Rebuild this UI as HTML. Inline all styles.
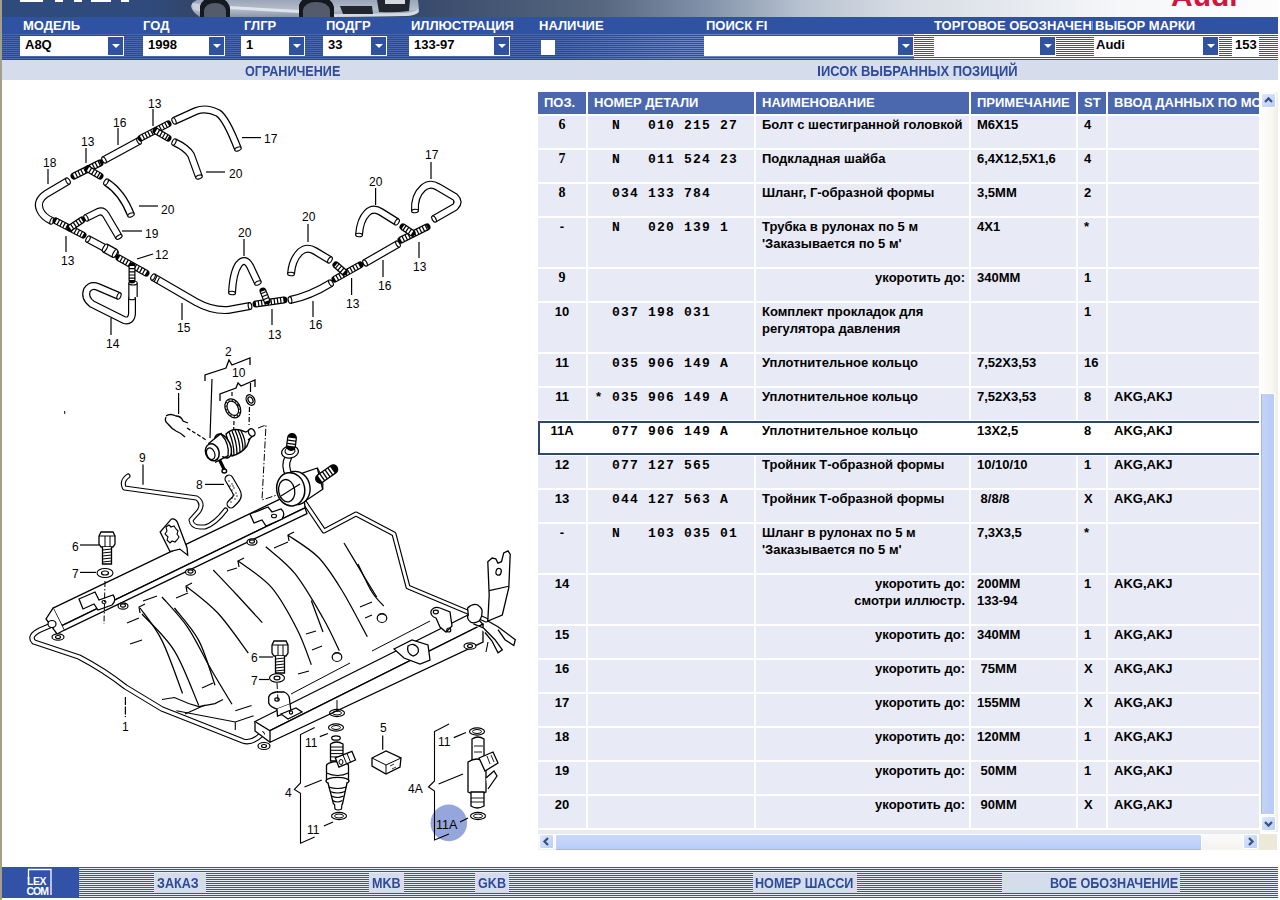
<!DOCTYPE html>
<html><head><meta charset="utf-8">
<style>
*{margin:0;padding:0;box-sizing:border-box}
html,body{width:1280px;height:900px;overflow:hidden;background:#fff;font-family:"Liberation Sans",sans-serif}
.a{position:absolute}
#lb{left:0;top:0;width:2px;height:900px;background:#a39f8a}
#top{left:2px;top:0;width:1276px;height:17px;background:linear-gradient(90deg,#2f4a7c 0px,#2f4a7c 150px,#33466a 190px,#36486a 400px,#56677f 600px,#8090a8 700px,#b8c2d0 800px,#d6dce4 900px,#e4e8ee 1000px,#f6f7f9 1120px,#fdfdfe 1276px)}
#band{left:2px;top:17px;width:1276px;height:17px;background:#3052a2}
#stripes{left:2px;top:34px;width:1276px;height:26px;background:repeating-linear-gradient(180deg,#4a66ad 0px,#4a66ad 1px,#2c4a90 1px,#2c4a90 2px)}
#stripesM{left:560px;top:34px;width:354px;height:26px;background:repeating-linear-gradient(180deg,#6a85c0 0px,#6a85c0 1px,#334f90 1px,#334f90 2px);-webkit-mask-image:linear-gradient(90deg,transparent,#000 120px)}
#stripesR{left:914px;top:34px;width:364px;height:26px;background:repeating-linear-gradient(180deg,#fff 0px,#fff 1px,#3a55a0 1px,#3a55a0 2px)}
.lbl{position:absolute;top:19px;color:#fff;font-weight:bold;font-size:13px;line-height:14px;white-space:nowrap}
.dd{position:absolute;top:36px;height:20px;background:#fff;border:1px solid #fff}
.dd .ar{position:absolute;right:0;top:0;width:15px;height:18px;background:#3052a2}
.dd .ar:after{content:"";position:absolute;left:4px;top:7px;border-left:4px solid transparent;border-right:4px solid transparent;border-top:4px solid #fff}
.dd .v{position:absolute;left:4px;top:1px;font-size:13px;font-weight:bold;line-height:14px;color:#000}
#title{left:2px;top:60px;width:1276px;height:20px;background:#d5dcec}
.ttl{position:absolute;top:64px;color:#2d4a9b;font-weight:bold;font-size:14px;line-height:14px;white-space:nowrap;transform:scaleX(0.9);transform-origin:0 0}
/* table */
.hd{position:absolute;top:92px;height:22px;background:#4b67ae}
.hdt{position:absolute;top:96px;color:#fff;font-weight:bold;font-size:13px;line-height:14px;white-space:nowrap;overflow:hidden}
.r{position:absolute;left:0;width:1280px}
.c{position:absolute;top:0;height:100%;background:#e8ebf5}
.sel .c{background:#fff}
.t{position:absolute;font-size:13px;line-height:17px;font-weight:bold;color:#000;white-space:nowrap}
.pos{left:538px;width:48px;text-align:center}
.part{margin-top:1px;left:612px;font-family:"Liberation Mono",monospace;font-size:13px;letter-spacing:1.2px}
.star{left:596px}
.ser{font-family:"Liberation Serif",serif;font-size:14px}
.name{left:762px}
.namer{left:756px;width:209px;text-align:right}
.note{left:977px}
.st{left:1084px}
.inp{left:1114px}
#selb{left:538px;top:421px;width:721px;height:34px;border:2px solid #2d4577;border-right:none}
/* scrollbars */
#vtrack{left:1259px;top:92px;width:19px;height:740px;background:linear-gradient(90deg,#fff 0%,#faf9f3 60%,#f0eee4 100%)}
.sbtn{position:absolute;width:15px;height:15px;border:1px solid #fff;border-radius:2px;background:linear-gradient(135deg,#dde8fd,#b8cdf5)}
#vthumb{left:1261px;top:393px;width:14px;height:422px;border:1px solid #fff;border-left:1px solid #aab6cc;border-radius:2px;background:linear-gradient(90deg,#c5d2f9,#b6cbf5)}
#htrack{left:538px;top:830px;width:722px;height:20px;background:linear-gradient(180deg,#e9eaee 0px,#e9eaee 4px,#fbfbfb 4px,#f4f3ee 20px)}
#hthumb{left:555px;top:834px;width:647px;height:16px;border:1px solid #fff;border-bottom:1px solid #aab6cc;border-radius:2px;background:linear-gradient(180deg,#cbd8fc,#b9cdf7)}
#corner{left:1259px;top:834px;width:18px;height:16px;background:#ece9d9}
/* footer */
#foot{left:2px;top:867px;width:1276px;height:31px;background:repeating-linear-gradient(180deg,#3d5594 0px,#3d5594 1px,#e9edf7 1px,#e9edf7 2px)}
#flogo{left:2px;top:867px;width:77px;height:31px;background:#3252a8}
.fb{position:absolute;top:873px;height:20px;background:#d5dcec}
.fbt{position:absolute;top:876px;color:#2d4a9b;font-weight:bold;font-size:14px;line-height:14px;white-space:nowrap;transform:scaleX(0.9);transform-origin:0 0}
</style></head><body>
<div class="a" id="lb"></div>
<div class="a" id="top"></div>
<div class="a" style="left:20px;top:0;width:23px;height:2px;background:#fff"></div>
<div class="a" style="left:55px;top:0;width:8px;height:2px;background:#fff"></div>
<div class="a" style="left:74px;top:0;width:8px;height:2px;background:#fff"></div>
<div class="a" style="left:91px;top:0;width:20px;height:2px;background:#fff"></div>
<div class="a" style="left:121px;top:0;width:8px;height:2px;background:#fff"></div>
<svg class="a" style="left:180px;top:0" width="250" height="17" viewBox="180 0 250 17">
<defs><linearGradient id="cg" x1="0" y1="0" x2="0" y2="1"><stop offset="0" stop-color="#9aa5b8"/><stop offset="0.55" stop-color="#b4bdcb"/><stop offset="1" stop-color="#8a95a8"/></linearGradient></defs>
<path d="M197,0 L418,0 L419,10 Q417,15 405,16 L340,17 L200,17 Q192,12 191,6 Q192,2 197,0 Z" fill="url(#cg)"/>
<path d="M192,3 L201,4 L201,12 L193,9 Z" fill="#c9d0da"/>
<path d="M228,6 L300,10 L300,13 L228,9 Z" fill="#dfe4ea"/><path d="M333,14 L405,13 Q415,12 418,9 L419,12 Q415,16 405,16 L333,17 Z" fill="#d5dae2"/>
<path d="M200,17 L200,6 Q203,-3 215,-3 Q228,-2 230,8 L230,17 Z" fill="#14181f"/>
<path d="M204,17 L204,10 Q206,3 215,3 Q225,3 226,11 L226,17 Z" fill="#545c6b"/>
<path d="M299,17 L299,5 Q302,-4 316,-4 Q332,-3 334,7 L334,17 Z" fill="#14181f"/>
<path d="M303,17 L303,10 Q305,2 316,2 Q328,2 330,10 L330,17 Z" fill="#545c6b"/>
<path d="M340,6 L372,6 L373,14 L343,14 Z" fill="#22262e"/>
<path d="M377,0 L410,0 L409,11 Q395,13 379,12 Z" fill="#22262e"/>
<rect x="385" y="0" width="20" height="4" fill="#d5d9df"/>
</svg>
<div class="a" style="left:1171px;top:-19px;font-size:30px;line-height:30px;font-weight:bold;color:#d4143c;letter-spacing:0px">Audi</div>
<div class="a" id="band"></div>
<div class="a" id="stripes"></div>
<div class="a" id="stripesM"></div><div class="a" id="stripesR"></div>

<div class="lbl" style="left:23px">МОДЕЛЬ</div>
<div class="lbl" style="left:143px">ГОД</div>
<div class="lbl" style="left:244px">ГЛГР</div>
<div class="lbl" style="left:326px">ПОДГР</div>
<div class="lbl" style="left:411px">ИЛЛЮСТРАЦИЯ</div>
<div class="lbl" style="left:539px">НАЛИЧИЕ</div>
<div class="lbl" style="left:706px">ПОИСК FI</div>
<div class="lbl" style="left:934px;width:159px;overflow:hidden">ТОРГОВОЕ ОБОЗНАЧЕНИЕ</div>
<div class="lbl" style="left:1095px">ВЫБОР МАРКИ</div>

<div class="dd" style="left:20px;width:104px"><div class="v">A8Q</div><div class="ar"></div></div>
<div class="dd" style="left:143px;width:82px"><div class="v">1998</div><div class="ar"></div></div>
<div class="dd" style="left:241px;width:64px"><div class="v">1</div><div class="ar"></div></div>
<div class="dd" style="left:323px;width:64px"><div class="v">33</div><div class="ar"></div></div>
<div class="dd" style="left:409px;width:101px"><div class="v">133-97</div><div class="ar"></div></div>
<div class="a" style="left:541px;top:40px;width:14px;height:15px;background:#fff"></div>
<div class="dd" style="left:704px;width:210px"><div class="ar"></div></div>
<div class="dd" style="left:934px;width:122px"><div class="ar"></div></div>
<div class="dd" style="left:1094px;width:125px"><div class="v" style="left:1px">Audi</div><div class="ar"></div></div>
<div class="dd" style="left:1232px;width:27px"><div class="v" style="left:2px">153</div></div>

<div class="a" id="title"></div>
<div class="ttl" style="left:245px">ОГРАНИЧЕНИЕ</div>
<div class="a" style="left:818px;top:66px;width:2px;height:10px;background:#2d4a9b"></div><div class="ttl" style="left:821px;transform:scaleX(0.925)">ИСОК ВЫБРАННЫХ ПОЗИЦИЙ</div>

<!-- drawing -->
<div class="a" style="left:0;top:0;width:530px;height:866px">
<svg class="a" style="left:0;top:0" width="530" height="866" viewBox="0 0 530 866" font-family="Liberation Sans, sans-serif"><text x="148" y="108" font-size="12">13</text>
<text x="113" y="127" font-size="12">16</text>
<text x="81" y="146" font-size="12">13</text>
<text x="43" y="167" font-size="12">18</text>
<text x="161" y="214" font-size="12">20</text>
<text x="145" y="238" font-size="12">19</text>
<text x="61" y="265" font-size="12">13</text>
<text x="155" y="259" font-size="12">12</text>
<text x="264" y="143" font-size="12">17</text>
<text x="229" y="178" font-size="12">20</text>
<text x="238" y="237" font-size="12">20</text>
<text x="302" y="221" font-size="12">20</text>
<text x="369" y="186" font-size="12">20</text>
<text x="425" y="159" font-size="12">17</text>
<text x="413" y="271" font-size="12">13</text>
<text x="378" y="290" font-size="12">16</text>
<text x="346" y="308" font-size="12">13</text>
<text x="309" y="329" font-size="12">16</text>
<text x="268" y="339" font-size="12">13</text>
<text x="177" y="332" font-size="12">15</text>
<text x="106" y="348" font-size="12">14</text>
<line x1="153" y1="109" x2="153" y2="126" stroke="#000" stroke-width="1.2" />
<line x1="118" y1="128" x2="118" y2="145" stroke="#000" stroke-width="1.2" />
<line x1="86" y1="148" x2="86" y2="163" stroke="#000" stroke-width="1.2" />
<line x1="48" y1="169" x2="48" y2="184" stroke="#000" stroke-width="1.2" />
<line x1="139" y1="206" x2="158" y2="206" stroke="#000" stroke-width="1.2" />
<line x1="122" y1="231" x2="142" y2="231" stroke="#000" stroke-width="1.2" />
<line x1="66" y1="236" x2="66" y2="252" stroke="#000" stroke-width="1.2" />
<line x1="137" y1="259" x2="153" y2="254" stroke="#000" stroke-width="1.2" />
<line x1="242" y1="137.6" x2="261" y2="137.6" stroke="#000" stroke-width="1.2" />
<line x1="206" y1="172" x2="225" y2="172" stroke="#000" stroke-width="1.2" />
<line x1="244" y1="239" x2="244" y2="256" stroke="#000" stroke-width="1.2" />
<line x1="308" y1="224" x2="308" y2="242" stroke="#000" stroke-width="1.2" />
<line x1="375.6" y1="188" x2="375.6" y2="205" stroke="#000" stroke-width="1.2" />
<line x1="431" y1="162" x2="431" y2="179" stroke="#000" stroke-width="1.2" />
<line x1="419" y1="242" x2="419" y2="258" stroke="#000" stroke-width="1.2" />
<line x1="383" y1="260" x2="383" y2="277" stroke="#000" stroke-width="1.2" />
<line x1="351.6" y1="278" x2="351.6" y2="295" stroke="#000" stroke-width="1.2" />
<line x1="313" y1="301" x2="313" y2="317" stroke="#000" stroke-width="1.2" />
<line x1="272" y1="309" x2="272" y2="325" stroke="#000" stroke-width="1.2" />
<line x1="182" y1="303" x2="182" y2="320" stroke="#000" stroke-width="1.2" />
<line x1="111" y1="318" x2="111" y2="335" stroke="#000" stroke-width="1.2" />
<path d="M104,160 L139,141" fill="none" stroke="#000" stroke-width="8" stroke-linecap="butt" stroke-linejoin="round"/>
<path d="M104,160 L139,141" fill="none" stroke="#fff" stroke-width="5.6" stroke-linecap="butt" stroke-linejoin="round"/>
<ellipse cx="104.0" cy="160.0" rx="1.8" ry="3.4" transform="rotate(-28.5 104.0 160.0)" fill="#fff" stroke="#000" stroke-width="1.1"/>
<ellipse cx="139.0" cy="141.0" rx="1.8" ry="3.4" transform="rotate(151.5 139.0 141.0)" fill="#fff" stroke="#000" stroke-width="1.1"/>
<path d="M68,181 L46,194 Q36,201 40,210 Q43,217 52,221" fill="none" stroke="#000" stroke-width="8" stroke-linecap="butt" stroke-linejoin="round"/>
<path d="M68,181 L46,194 Q36,201 40,210 Q43,217 52,221" fill="none" stroke="#fff" stroke-width="5.6" stroke-linecap="butt" stroke-linejoin="round"/>
<ellipse cx="68.0" cy="181.0" rx="1.8" ry="3.4" transform="rotate(149.4 68.0 181.0)" fill="#fff" stroke="#000" stroke-width="1.1"/>
<ellipse cx="52.0" cy="221.0" rx="1.8" ry="3.4" transform="rotate(-156.0 52.0 221.0)" fill="#fff" stroke="#000" stroke-width="1.1"/>
<path d="M106,182 Q122,192 131,215" fill="none" stroke="#000" stroke-width="8" stroke-linecap="butt" stroke-linejoin="round"/>
<path d="M106,182 Q122,192 131,215" fill="none" stroke="#fff" stroke-width="5.6" stroke-linecap="butt" stroke-linejoin="round"/>
<ellipse cx="106.0" cy="182.0" rx="1.8" ry="3.4" transform="rotate(32.0 106.0 182.0)" fill="#fff" stroke="#000" stroke-width="1.1"/>
<ellipse cx="131.0" cy="215.0" rx="1.8" ry="3.4" transform="rotate(-111.4 131.0 215.0)" fill="#fff" stroke="#000" stroke-width="1.1"/>
<path d="M86,218 L98,212 Q103,210 106,215 L119,237" fill="none" stroke="#000" stroke-width="8" stroke-linecap="butt" stroke-linejoin="round"/>
<path d="M86,218 L98,212 Q103,210 106,215 L119,237" fill="none" stroke="#fff" stroke-width="5.6" stroke-linecap="butt" stroke-linejoin="round"/>
<ellipse cx="86.0" cy="218.0" rx="1.8" ry="3.4" transform="rotate(-26.6 86.0 218.0)" fill="#fff" stroke="#000" stroke-width="1.1"/>
<ellipse cx="119.0" cy="237.0" rx="1.8" ry="3.4" transform="rotate(-120.6 119.0 237.0)" fill="#fff" stroke="#000" stroke-width="1.1"/>
<path d="M174,121 L196,111 Q206,107 218,113 Q226,118 238,149" fill="none" stroke="#000" stroke-width="8" stroke-linecap="butt" stroke-linejoin="round"/>
<path d="M174,121 L196,111 Q206,107 218,113 Q226,118 238,149" fill="none" stroke="#fff" stroke-width="5.6" stroke-linecap="butt" stroke-linejoin="round"/>
<ellipse cx="174.0" cy="121.0" rx="1.8" ry="3.4" transform="rotate(-24.4 174.0 121.0)" fill="#fff" stroke="#000" stroke-width="1.1"/>
<ellipse cx="238.0" cy="149.0" rx="1.8" ry="3.4" transform="rotate(-111.2 238.0 149.0)" fill="#fff" stroke="#000" stroke-width="1.1"/>
<path d="M174,142 Q187,148 191,155 L199,177" fill="none" stroke="#000" stroke-width="8" stroke-linecap="butt" stroke-linejoin="round"/>
<path d="M174,142 Q187,148 191,155 L199,177" fill="none" stroke="#fff" stroke-width="5.6" stroke-linecap="butt" stroke-linejoin="round"/>
<ellipse cx="174.0" cy="142.0" rx="1.8" ry="3.4" transform="rotate(24.8 174.0 142.0)" fill="#fff" stroke="#000" stroke-width="1.1"/>
<ellipse cx="199.0" cy="177.0" rx="1.8" ry="3.4" transform="rotate(-110.0 199.0 177.0)" fill="#fff" stroke="#000" stroke-width="1.1"/>
<path d="M88,239 L116,254" fill="none" stroke="#000" stroke-width="8" stroke-linecap="butt" stroke-linejoin="round"/>
<path d="M88,239 L116,254" fill="none" stroke="#fff" stroke-width="5.6" stroke-linecap="butt" stroke-linejoin="round"/>
<ellipse cx="88.0" cy="239.0" rx="1.8" ry="3.4" transform="rotate(28.2 88.0 239.0)" fill="#fff" stroke="#000" stroke-width="1.1"/>
<ellipse cx="116.0" cy="254.0" rx="1.8" ry="3.4" transform="rotate(-151.8 116.0 254.0)" fill="#fff" stroke="#000" stroke-width="1.1"/>
<path d="M132,298 L132,314 Q131,322 124,320 L92,304 Q84,298 87,290 Q91,284 98,287 L119,296" fill="none" stroke="#000" stroke-width="8" stroke-linecap="butt" stroke-linejoin="round"/>
<path d="M132,298 L132,314 Q131,322 124,320 L92,304 Q84,298 87,290 Q91,284 98,287 L119,296" fill="none" stroke="#fff" stroke-width="5.6" stroke-linecap="butt" stroke-linejoin="round"/>
<ellipse cx="132.0" cy="298.0" rx="1.8" ry="3.4" transform="rotate(90.0 132.0 298.0)" fill="#fff" stroke="#000" stroke-width="1.1"/>
<ellipse cx="119.0" cy="296.0" rx="1.8" ry="3.4" transform="rotate(-156.8 119.0 296.0)" fill="#fff" stroke="#000" stroke-width="1.1"/>
<path d="M153,277 L196,302 Q212,311 228,310 L250,306" fill="none" stroke="#000" stroke-width="8" stroke-linecap="butt" stroke-linejoin="round"/>
<path d="M153,277 L196,302 Q212,311 228,310 L250,306" fill="none" stroke="#fff" stroke-width="5.6" stroke-linecap="butt" stroke-linejoin="round"/>
<ellipse cx="153.0" cy="277.0" rx="1.8" ry="3.4" transform="rotate(30.2 153.0 277.0)" fill="#fff" stroke="#000" stroke-width="1.1"/>
<ellipse cx="250.0" cy="306.0" rx="1.8" ry="3.4" transform="rotate(169.7 250.0 306.0)" fill="#fff" stroke="#000" stroke-width="1.1"/>
<path d="M232,293 Q233,272 239,264 Q245,257 250,266 L258,283" fill="none" stroke="#000" stroke-width="8" stroke-linecap="butt" stroke-linejoin="round"/>
<path d="M232,293 Q233,272 239,264 Q245,257 250,266 L258,283" fill="none" stroke="#fff" stroke-width="5.6" stroke-linecap="butt" stroke-linejoin="round"/>
<ellipse cx="232.0" cy="293.0" rx="1.8" ry="3.4" transform="rotate(-87.3 232.0 293.0)" fill="#fff" stroke="#000" stroke-width="1.1"/>
<ellipse cx="258.0" cy="283.0" rx="1.8" ry="3.4" transform="rotate(-115.2 258.0 283.0)" fill="#fff" stroke="#000" stroke-width="1.1"/>
<path d="M291,274 Q292,260 300,252 Q307,246 315,251 L330,260" fill="none" stroke="#000" stroke-width="8" stroke-linecap="butt" stroke-linejoin="round"/>
<path d="M291,274 Q292,260 300,252 Q307,246 315,251 L330,260" fill="none" stroke="#fff" stroke-width="5.6" stroke-linecap="butt" stroke-linejoin="round"/>
<ellipse cx="291.0" cy="274.0" rx="1.8" ry="3.4" transform="rotate(-85.9 291.0 274.0)" fill="#fff" stroke="#000" stroke-width="1.1"/>
<ellipse cx="330.0" cy="260.0" rx="1.8" ry="3.4" transform="rotate(-149.0 330.0 260.0)" fill="#fff" stroke="#000" stroke-width="1.1"/>
<path d="M290,300 Q310,296 331,283" fill="none" stroke="#000" stroke-width="8" stroke-linecap="butt" stroke-linejoin="round"/>
<path d="M290,300 Q310,296 331,283" fill="none" stroke="#fff" stroke-width="5.6" stroke-linecap="butt" stroke-linejoin="round"/>
<ellipse cx="290.0" cy="300.0" rx="1.8" ry="3.4" transform="rotate(-11.3 290.0 300.0)" fill="#fff" stroke="#000" stroke-width="1.1"/>
<ellipse cx="331.0" cy="283.0" rx="1.8" ry="3.4" transform="rotate(148.2 331.0 283.0)" fill="#fff" stroke="#000" stroke-width="1.1"/>
<path d="M359,235 Q360,220 367,213 Q373,207 381,212 L397,222" fill="none" stroke="#000" stroke-width="8" stroke-linecap="butt" stroke-linejoin="round"/>
<path d="M359,235 Q360,220 367,213 Q373,207 381,212 L397,222" fill="none" stroke="#fff" stroke-width="5.6" stroke-linecap="butt" stroke-linejoin="round"/>
<ellipse cx="359.0" cy="235.0" rx="1.8" ry="3.4" transform="rotate(-86.2 359.0 235.0)" fill="#fff" stroke="#000" stroke-width="1.1"/>
<ellipse cx="397.0" cy="222.0" rx="1.8" ry="3.4" transform="rotate(-148.0 397.0 222.0)" fill="#fff" stroke="#000" stroke-width="1.1"/>
<path d="M365,263 L398,244" fill="none" stroke="#000" stroke-width="8" stroke-linecap="butt" stroke-linejoin="round"/>
<path d="M365,263 L398,244" fill="none" stroke="#fff" stroke-width="5.6" stroke-linecap="butt" stroke-linejoin="round"/>
<ellipse cx="365.0" cy="263.0" rx="1.8" ry="3.4" transform="rotate(-29.9 365.0 263.0)" fill="#fff" stroke="#000" stroke-width="1.1"/>
<ellipse cx="398.0" cy="244.0" rx="1.8" ry="3.4" transform="rotate(150.1 398.0 244.0)" fill="#fff" stroke="#000" stroke-width="1.1"/>
<path d="M415,211 Q414,196 423,188 Q430,182 438,187 L455,197 Q460,202 455,207 L434,219" fill="none" stroke="#000" stroke-width="8" stroke-linecap="butt" stroke-linejoin="round"/>
<path d="M415,211 Q414,196 423,188 Q430,182 438,187 L455,197 Q460,202 455,207 L434,219" fill="none" stroke="#fff" stroke-width="5.6" stroke-linecap="butt" stroke-linejoin="round"/>
<ellipse cx="415.0" cy="211.0" rx="1.8" ry="3.4" transform="rotate(-93.8 415.0 211.0)" fill="#fff" stroke="#000" stroke-width="1.1"/>
<ellipse cx="434.0" cy="219.0" rx="1.8" ry="3.4" transform="rotate(-29.7 434.0 219.0)" fill="#fff" stroke="#000" stroke-width="1.1"/>
<path d="M105,248 L115,253.5" fill="none" stroke="#000" stroke-width="10" stroke-linecap="butt" stroke-linejoin="round"/>
<path d="M105,248 L115,253.5" fill="none" stroke="#fff" stroke-width="7.6" stroke-linecap="butt" stroke-linejoin="round"/>
<ellipse cx="115.0" cy="253.5" rx="1.8" ry="4.4" transform="rotate(-151.2 115.0 253.5)" fill="#fff" stroke="#000" stroke-width="1.1"/>
<ellipse cx="105.0" cy="248.0" rx="1.8" ry="4.4" transform="rotate(28.8 105.0 248.0)" fill="#fff" stroke="#000" stroke-width="1.1"/>
<path d="M133,283 L133,297" fill="none" stroke="#000" stroke-width="9.5" stroke-linecap="butt" stroke-linejoin="round"/>
<path d="M133,283 L133,297" fill="none" stroke="#fff" stroke-width="7.1" stroke-linecap="butt" stroke-linejoin="round"/>
<ellipse cx="133" cy="283" rx="4.2" ry="2" fill="#fff" stroke="#000" stroke-width="1.1"/>
<line x1="157" y1="276" x2="154" y2="282" stroke="#000" stroke-width="1.1" />
<line x1="159.5" y1="277.5" x2="156.5" y2="283.5" stroke="#000" stroke-width="1.1" />
<line x1="141" y1="138" x2="168" y2="124" stroke="#000" stroke-width="7" stroke-linecap="round"/>
<line x1="141" y1="138" x2="168" y2="124" stroke="#fff" stroke-width="4.6" stroke-dasharray="2 1.2" stroke-linecap="butt"/>
<line x1="156" y1="131" x2="168" y2="138" stroke="#000" stroke-width="7" stroke-linecap="round"/>
<line x1="156" y1="131" x2="168" y2="138" stroke="#fff" stroke-width="4.6" stroke-dasharray="2 1.2" stroke-linecap="butt"/>
<line x1="74" y1="176" x2="100" y2="163" stroke="#000" stroke-width="7" stroke-linecap="round"/>
<line x1="74" y1="176" x2="100" y2="163" stroke="#fff" stroke-width="4.6" stroke-dasharray="2 1.2" stroke-linecap="butt"/>
<line x1="88" y1="169" x2="100" y2="176" stroke="#000" stroke-width="7" stroke-linecap="round"/>
<line x1="88" y1="169" x2="100" y2="176" stroke="#fff" stroke-width="4.6" stroke-dasharray="2 1.2" stroke-linecap="butt"/>
<line x1="56" y1="221" x2="83" y2="235" stroke="#000" stroke-width="7" stroke-linecap="round"/>
<line x1="56" y1="221" x2="83" y2="235" stroke="#fff" stroke-width="4.6" stroke-dasharray="2 1.2" stroke-linecap="butt"/>
<line x1="70" y1="228" x2="82" y2="220" stroke="#000" stroke-width="7" stroke-linecap="round"/>
<line x1="70" y1="228" x2="82" y2="220" stroke="#fff" stroke-width="4.6" stroke-dasharray="2 1.2" stroke-linecap="butt"/>
<line x1="119" y1="258" x2="146" y2="273" stroke="#000" stroke-width="7" stroke-linecap="round"/>
<line x1="119" y1="258" x2="146" y2="273" stroke="#fff" stroke-width="4.6" stroke-dasharray="2 1.2" stroke-linecap="butt"/>
<line x1="132" y1="266" x2="132" y2="280" stroke="#000" stroke-width="7" stroke-linecap="round"/>
<line x1="132" y1="266" x2="132" y2="280" stroke="#fff" stroke-width="4.6" stroke-dasharray="2 1.2" stroke-linecap="butt"/>
<line x1="256" y1="304" x2="284" y2="300" stroke="#000" stroke-width="7" stroke-linecap="round"/>
<line x1="256" y1="304" x2="284" y2="300" stroke="#fff" stroke-width="4.6" stroke-dasharray="2 1.2" stroke-linecap="butt"/>
<line x1="267" y1="301" x2="263" y2="291" stroke="#000" stroke-width="7" stroke-linecap="round"/>
<line x1="267" y1="301" x2="263" y2="291" stroke="#fff" stroke-width="4.6" stroke-dasharray="2 1.2" stroke-linecap="butt"/>
<line x1="335" y1="279" x2="360" y2="265" stroke="#000" stroke-width="7" stroke-linecap="round"/>
<line x1="335" y1="279" x2="360" y2="265" stroke="#fff" stroke-width="4.6" stroke-dasharray="2 1.2" stroke-linecap="butt"/>
<line x1="344" y1="272" x2="336" y2="265" stroke="#000" stroke-width="7" stroke-linecap="round"/>
<line x1="344" y1="272" x2="336" y2="265" stroke="#fff" stroke-width="4.6" stroke-dasharray="2 1.2" stroke-linecap="butt"/>
<line x1="401" y1="240" x2="427" y2="227" stroke="#000" stroke-width="7" stroke-linecap="round"/>
<line x1="401" y1="240" x2="427" y2="227" stroke="#fff" stroke-width="4.6" stroke-dasharray="2 1.2" stroke-linecap="butt"/>
<line x1="412" y1="233" x2="403" y2="227" stroke="#000" stroke-width="7" stroke-linecap="round"/>
<line x1="412" y1="233" x2="403" y2="227" stroke="#fff" stroke-width="4.6" stroke-dasharray="2 1.2" stroke-linecap="butt"/>
<text x="225" y="356" font-size="12">2</text>
<path d="M205,381 L205,375 L226,368 L229,360 L232,365 L250,358 L250,365" fill="none" stroke="#000" stroke-width="1.3" />
<line x1="212" y1="379" x2="210" y2="438" stroke="#000" stroke-width="1.2" />
<text x="232" y="377" font-size="12">10</text>
<path d="M220,401 L220,394 L236,388 L238,383 L241,386 L255,380 L255,387" fill="none" stroke="#000" stroke-width="1.3" />
<line x1="232" y1="392" x2="232" y2="396" stroke="#000" stroke-width="1.2" />
<line x1="234" y1="421" x2="233.7" y2="429" stroke="#000" stroke-width="1.2" stroke-dasharray="4 2"/>
<line x1="250.5" y1="383" x2="250.5" y2="392" stroke="#000" stroke-width="1.2" />
<line x1="249.5" y1="407" x2="249" y2="426" stroke="#000" stroke-width="1.2" stroke-dasharray="5 2 1 2"/>
<ellipse cx="232.8" cy="408.3" rx="7.3" ry="10" transform="rotate(-28 232.8 408.3)" fill="none" stroke="#000" stroke-width="1.3"/>
<ellipse cx="232.8" cy="408.3" rx="5.2" ry="7.6" transform="rotate(-28 232.8 408.3)" fill="none" stroke="#000" stroke-width="1.2"/>
<ellipse cx="232.8" cy="408.3" rx="6.2" ry="8.8" transform="rotate(-28 232.8 408.3)" fill="none" stroke="#000" stroke-width="1.6" stroke-dasharray="1 2.5"/>
<ellipse cx="250.5" cy="400" rx="4" ry="5.5" transform="rotate(-28 250.5 400)" fill="none" stroke="#000" stroke-width="1.3"/>
<ellipse cx="250.5" cy="400" rx="2.2" ry="3.3" transform="rotate(-28 250.5 400)" fill="none" stroke="#000" stroke-width="1.2"/>
<text x="175" y="390" font-size="12">3</text>
<line x1="178.6" y1="393" x2="178.6" y2="414" stroke="#000" stroke-width="1.2" />
<path d="M166,416 Q170,413 176,416 Q181,416 183,421 L188,423 M166,417 Q164,421 168,424 Q172,429 176,431 Q181,433 185,437" fill="none" stroke="#000" stroke-width="1.3" />
<line x1="187" y1="428" x2="205.7" y2="439.7" stroke="#000" stroke-width="1.2" stroke-dasharray="4 2"/>
<path d="M226,434 Q232,428 240,430 L246,432 L251,436 L247,446 Q242,453 232,456 Z" fill="#fff" stroke="#000" stroke-width="1.4" />
<path d="M229,432 Q234,443.5 234,455" fill="none" stroke="#000" stroke-width="1.3" />
<path d="M232,431 Q237,442.5 237,454" fill="none" stroke="#000" stroke-width="1.3" />
<path d="M235,430 Q240,441.0 240,452" fill="none" stroke="#000" stroke-width="1.3" />
<path d="M238,430 Q243,440.0 243,450" fill="none" stroke="#000" stroke-width="1.3" />
<path d="M241,431 Q246,439.5 245,448" fill="none" stroke="#000" stroke-width="1.3" />
<ellipse cx="223" cy="446" rx="7.3" ry="12.7" transform="rotate(-25 223 446)" fill="#fff" stroke="#000" stroke-width="1.5"/>
<path d="M208,444 L221,434 L228,452 L215,462 Z" fill="#fff" stroke="#000" stroke-width="0" />
<line x1="208.3" y1="443.7" x2="221.7" y2="433" stroke="#000" stroke-width="1.4" />
<line x1="215" y1="462.3" x2="228.3" y2="455.7" stroke="#000" stroke-width="1.4" />
<path d="M221,434 Q230,444 228,456" fill="none" stroke="#000" stroke-width="1.3" />
<ellipse cx="212.3" cy="452.3" rx="6.7" ry="8.7" transform="rotate(-20 212.3 452.3)" fill="#fff" stroke="#000" stroke-width="1.5"/>
<ellipse cx="210.7" cy="453.7" rx="4" ry="6" transform="rotate(-20 210.7 453.7)" fill="none" stroke="#000" stroke-width="1.2"/>
<path d="M246,432 L251,429 L253,436 L248,440" fill="#fff" stroke="#000" stroke-width="1.3" />
<ellipse cx="251.7" cy="432.5" rx="3" ry="4" transform="rotate(-30 251.7 432.5)" fill="#fff" stroke="#000" stroke-width="1.4"/>
<line x1="219.7" y1="460.3" x2="224.3" y2="469.7" stroke="#000" stroke-width="3.2" />
<line x1="219.7" y1="460.3" x2="224.3" y2="469.7" stroke="#000" stroke-width="1.2" stroke="#fff"/>
<ellipse cx="224.3" cy="471" rx="2.3" ry="2" transform="rotate(0 224.3 471)" fill="none" stroke="#000" stroke-width="1.4"/>
<path d="M229,479 L236,491 Q239,496 235,500 L231,504" fill="none" stroke="#000" stroke-width="9" stroke-linecap="round" stroke-linejoin="round"/>
<path d="M229,479 L236,491 Q239,496 235,500 L231,504" fill="none" stroke="#fff" stroke-width="6.6" stroke-linecap="round" stroke-linejoin="round"/>
<circle cx="229" cy="481" r="0.7" fill="#000"/>
<circle cx="232" cy="484" r="0.7" fill="#000"/>
<circle cx="230" cy="486" r="0.7" fill="#000"/>
<circle cx="234" cy="488" r="0.7" fill="#000"/>
<circle cx="232" cy="490" r="0.7" fill="#000"/>
<circle cx="236" cy="493" r="0.7" fill="#000"/>
<circle cx="234" cy="495" r="0.7" fill="#000"/>
<circle cx="237" cy="496" r="0.7" fill="#000"/>
<circle cx="232" cy="498" r="0.7" fill="#000"/>
<circle cx="235" cy="499" r="0.7" fill="#000"/>
<circle cx="231" cy="502" r="0.7" fill="#000"/>
<circle cx="233" cy="486" r="0.7" fill="#000"/>
<text x="196" y="489" font-size="12">8</text>
<line x1="205" y1="484.4" x2="224" y2="484.4" stroke="#000" stroke-width="1.2" />
<text x="139" y="461.5" font-size="12">9</text>
<line x1="143" y1="464.4" x2="143" y2="484.7" stroke="#000" stroke-width="1.2" />
<path d="M128,476 Q121,481 124.4,488 L196.7,498 Q204,503 199,511 L191,520 Q192,527 200,527 L205,527 Q215,524 225.6,510" fill="none" stroke="#000" stroke-width="5" stroke-linecap="round" stroke-linejoin="round"/>
<path d="M128,476 Q121,481 124.4,488 L196.7,498 Q204,503 199,511 L191,520 Q192,527 200,527 L205,527 Q215,524 225.6,510" fill="none" stroke="#fff" stroke-width="2.8" stroke-linecap="round" stroke-linejoin="round"/>
<path d="M258,428 L266,425 L262,500 L286,492" fill="none" stroke="#000" stroke-width="1" stroke-dasharray="7 2 1.5 2"/>
<path d="M305,503 L324,531 L356,514 L394,534 L408,587 L470,613 L486,620" fill="none" stroke="#000" stroke-width="5" stroke-linecap="round" stroke-linejoin="round"/>
<path d="M305,503 L324,531 L356,514 L394,534 L408,587 L470,613 L486,620" fill="none" stroke="#fff" stroke-width="2.8" stroke-linecap="round" stroke-linejoin="round"/>
<path d="M54,624 L40,630 Q28,636 34,642 L79,657 Q104,670 125.6,687 L162,709 L195,722 L243,741 Q252,744 262,734" fill="none" stroke="#000" stroke-width="5.5" stroke-linecap="round" stroke-linejoin="round"/>
<path d="M54,624 L40,630 Q28,636 34,642 L79,657 Q104,670 125.6,687 L162,709 L195,722 L243,741 Q252,744 262,734" fill="none" stroke="#fff" stroke-width="3.3" stroke-linecap="round" stroke-linejoin="round"/>
<path d="M162,699.5 L174.4,697.5 L188.6,703.6 L198.8,706.6 L215,703.6 L223,699.5 M235.3,710.7 L251.6,705.6 M176.4,710.7 L235.3,722 L253.6,715.8 M235.3,722 L235.3,730" fill="none" stroke="#000" stroke-width="1.1" />
<path d="M53,608.1 L303,488.1 L305,507.8 L62,625.7 Z" fill="#fff" stroke="#000" stroke-width="1.3" />
<path d="M62,625.7 L305,507.8 L307,513.6 L64,630.3 Z" fill="#fff" stroke="#000" stroke-width="1.3" />
<path d="M53,608.1 L46,619 L57,634 L64,630.3" fill="#fff" stroke="#000" stroke-width="1.3" />
<ellipse cx="52" cy="624" rx="4" ry="3.5" transform="rotate(0 52 624)" fill="#fff" stroke="#000" stroke-width="1.2"/>
<ellipse cx="58" cy="637" rx="6" ry="3.2" transform="rotate(0 58 637)" fill="#fff" stroke="#000" stroke-width="1.2"/>
<ellipse cx="58" cy="637" rx="2.5" ry="1.5" transform="rotate(0 58 637)" fill="none" stroke="#000" stroke-width="1.2"/>
<path d="M288,458 Q284,466 289,475" fill="none" stroke="#000" stroke-width="8" stroke-linecap="round" stroke-linejoin="round"/>
<path d="M288,458 Q284,466 289,475" fill="none" stroke="#fff" stroke-width="5.6" stroke-linecap="round" stroke-linejoin="round"/>
<ellipse cx="290" cy="452" rx="8.5" ry="6" transform="rotate(-10 290 452)" fill="#fff" stroke="#000" stroke-width="1.3"/>
<ellipse cx="290" cy="451" rx="5" ry="3.5" transform="rotate(-10 290 451)" fill="none" stroke="#000" stroke-width="1.1"/>
<line x1="292" y1="438" x2="291" y2="446" stroke="#000" stroke-width="10" stroke-linecap="round"/>
<line x1="292" y1="438" x2="291" y2="446" stroke="#fff" stroke-width="7.4" stroke-dasharray="2 1.3" stroke-linecap="butt"/>
<path d="M298,474.7 L317.3,468 L322.7,489.3 L302.7,502.7 Z" fill="#fff" stroke="#000" stroke-width="1.3" />
<path d="M317.3,468 Q324,478 322.7,489.3" fill="none" stroke="#000" stroke-width="1.2" />
<line x1="320" y1="478.7" x2="333.3" y2="469.3" stroke="#000" stroke-width="10" stroke-linecap="round"/>
<line x1="320" y1="478.7" x2="333.3" y2="469.3" stroke="#fff" stroke-width="7.4" stroke-dasharray="2 1.3" stroke-linecap="butt"/>
<ellipse cx="296" cy="488" rx="14" ry="16.7" transform="rotate(-10 296 488)" fill="#fff" stroke="#000" stroke-width="1.4"/>
<ellipse cx="290.7" cy="489.3" rx="14" ry="16.7" transform="rotate(-10 290.7 489.3)" fill="#fff" stroke="#000" stroke-width="1.5"/>
<ellipse cx="286.7" cy="490.7" rx="8" ry="11.3" transform="rotate(-10 286.7 490.7)" fill="none" stroke="#000" stroke-width="1.3"/>
<path d="M281,496 L300,484" fill="none" stroke="#000" stroke-width="1.1" />
<path d="M250,514 L268,507 L272,512 L281,509 Q286,513 282,519 L266,526 L262,520 L254,523 Z" fill="#fff" stroke="#000" stroke-width="1.3" />
<ellipse cx="274" cy="516" rx="2.5" ry="1.8" transform="rotate(0 274 516)" fill="none" stroke="#000" stroke-width="1.1"/>
<ellipse cx="123" cy="606" rx="5" ry="3.2" transform="rotate(0 123 606)" fill="#fff" stroke="#000" stroke-width="1.2"/>
<ellipse cx="123" cy="605.5" rx="2.5" ry="1.6" transform="rotate(0 123 605.5)" fill="none" stroke="#000" stroke-width="1.1"/>
<ellipse cx="190.5" cy="572" rx="5" ry="3.2" transform="rotate(0 190.5 572)" fill="#fff" stroke="#000" stroke-width="1.2"/>
<ellipse cx="190.5" cy="571.5" rx="2.5" ry="1.6" transform="rotate(0 190.5 571.5)" fill="none" stroke="#000" stroke-width="1.1"/>
<ellipse cx="252" cy="542" rx="5" ry="3.2" transform="rotate(0 252 542)" fill="#fff" stroke="#000" stroke-width="1.2"/>
<ellipse cx="252" cy="541.5" rx="2.5" ry="1.6" transform="rotate(0 252 541.5)" fill="none" stroke="#000" stroke-width="1.1"/>
<ellipse cx="337" cy="657" rx="4.8" ry="4.5" transform="rotate(0 337 657)" fill="none" stroke="#000" stroke-width="1.2"/>
<path d="M333,655 Q337,651 341,655" fill="none" stroke="#000" stroke-width="1" />
<ellipse cx="382" cy="618" rx="4.8" ry="4.5" transform="rotate(0 382 618)" fill="none" stroke="#000" stroke-width="1.2"/>
<path d="M378,616 Q382,612 386,616" fill="none" stroke="#000" stroke-width="1" />
<path d="M140,608 C143.7,613.4 154.9,626.4 162,640.6 C169.1,654.8 179.1,684.6 182.5,693.4" fill="none" stroke="#000" stroke-width="1.25" />
<path d="M142,614 C147.4,620.1 164.9,635.5 174.4,650.8 C183.9,666.1 194.7,696.5 198.8,705.6" fill="none" stroke="#000" stroke-width="1.25" />
<path d="M174.4,608 C178.5,613.4 192.0,627.7 198.8,640.6 C205.6,653.5 212.3,677.8 215,685.3" fill="none" stroke="#000" stroke-width="1.25" />
<path d="M162,597 C166.3,602.0 179.5,615.2 187.7,627.3 C195.9,639.3 203.6,656.5 211,669.3 C218.4,682.1 228.5,698.5 232,704.3" fill="none" stroke="#000" stroke-width="1.25" />
<path d="M186.5,586.5 C191.8,591.0 207.7,602.2 218,613.3 C228.3,624.4 243.2,646.4 248.3,653" fill="none" stroke="#000" stroke-width="1.25" />
<path d="M213.3,570 C217.2,574.1 228.5,585.9 236.7,594.7 C244.9,603.5 258.0,618.0 262.3,622.7" fill="none" stroke="#000" stroke-width="1.25" />
<path d="M237.8,560.8 C243.5,565.3 261.8,576.2 271.7,587.7 C281.6,599.2 290.7,616.9 297.3,629.7 C303.9,642.5 309.0,658.9 311.3,664.7" fill="none" stroke="#000" stroke-width="1.25" />
<path d="M265.8,546.8 C270.7,551.3 285.5,561.8 295,573.7 C304.5,585.6 315.6,605.2 323,618 C330.4,630.8 336.6,645.2 339.3,650.7" fill="none" stroke="#000" stroke-width="1.25" />
<path d="M288,535.2 C293.1,538.9 309.4,548.2 318.3,557.3 C327.2,566.4 333.5,576.8 341.7,590 C349.9,603.2 363.0,628.9 367.3,636.7" fill="none" stroke="#000" stroke-width="1.25" />
<path d="M311.3,600.5 C313.2,605.8 321.1,626.8 323,632" fill="none" stroke="#000" stroke-width="1.25" />
<path d="M344,543 C347.5,548.8 359.6,569.0 365,578 C370.4,587.0 374.8,593.8 376.7,597" fill="none" stroke="#000" stroke-width="1.25" />
<path d="M358,564 C360.3,568.7 367.7,585.0 372,592 C376.3,599.0 381.8,603.7 383.7,606" fill="none" stroke="#000" stroke-width="1.25" />
<path d="M145,604 L139,607 L140,613" fill="none" stroke="#000" stroke-width="1.2" />
<path d="M192,583 L186,586 L187,592" fill="none" stroke="#000" stroke-width="1.2" />
<path d="M244,558 L238,561 L239,567" fill="none" stroke="#000" stroke-width="1.2" />
<path d="M294,532 L288,535 L289,541" fill="none" stroke="#000" stroke-width="1.2" />
<line x1="127" y1="623" x2="139" y2="618" stroke="#000" stroke-width="1.1" />
<line x1="143" y1="601" x2="157" y2="596" stroke="#000" stroke-width="1.1" />
<line x1="176" y1="598" x2="188" y2="593" stroke="#000" stroke-width="1.1" />
<line x1="227" y1="571" x2="237" y2="568" stroke="#000" stroke-width="1.1" />
<line x1="274" y1="548" x2="288" y2="542" stroke="#000" stroke-width="1.1" />
<line x1="306" y1="634" x2="316" y2="631" stroke="#000" stroke-width="1.1" />
<line x1="298" y1="674" x2="309" y2="671" stroke="#000" stroke-width="1.1" />
<line x1="312" y1="650" x2="322" y2="646" stroke="#000" stroke-width="1.1" />
<line x1="360" y1="607" x2="372" y2="602" stroke="#000" stroke-width="1.1" />
<line x1="365" y1="618" x2="372" y2="615" stroke="#000" stroke-width="1.1" />
<line x1="202" y1="688" x2="213" y2="683" stroke="#000" stroke-width="1.1" />
<line x1="185" y1="714" x2="205" y2="705" stroke="#000" stroke-width="1.1" />
<line x1="130" y1="644" x2="142" y2="640" stroke="#000" stroke-width="1.1" />
<path d="M255,721.5 L472,613.0 L483,624.2 L270,730.7 Z" fill="#fff" stroke="#000" stroke-width="1.3" />
<path d="M270,730.7 L483,624.2 L483,642.2 L270,742.3 Z" fill="#fff" stroke="#000" stroke-width="1.3" />
<path d="M255,721.5 L255,731 L270,742.3" fill="#fff" stroke="#000" stroke-width="1.3" />
<path d="M291,694 L350,663 M372,651 L430,621" fill="none" stroke="#000" stroke-width="1" />
<ellipse cx="264" cy="746" rx="6" ry="3.5" transform="rotate(0 264 746)" fill="#fff" stroke="#000" stroke-width="1.2"/>
<ellipse cx="264" cy="746" rx="2.5" ry="1.5" transform="rotate(0 264 746)" fill="none" stroke="#000" stroke-width="1.2"/>
<ellipse cx="470" cy="646" rx="6" ry="3.2" transform="rotate(0 470 646)" fill="#fff" stroke="#000" stroke-width="1.2"/>
<ellipse cx="470" cy="646" rx="2.5" ry="1.5" transform="rotate(0 470 646)" fill="none" stroke="#000" stroke-width="1.2"/>
<path d="M487.8,561.7 L492.1,558 L495.8,558.8 L497.9,563.1 L501.5,561.7 L503.7,553 L508,550.8 L510.2,554.5 L508.8,587.7 L502.3,615 L487.8,621 L489.2,595 Z" fill="#fff" stroke="#000" stroke-width="1.3" />
<line x1="489.2" y1="590.6" x2="508.8" y2="586.2" stroke="#000" stroke-width="1.1" />
<ellipse cx="498.6" cy="571.8" rx="2.6" ry="3.4" transform="rotate(15 498.6 571.8)" fill="none" stroke="#000" stroke-width="1.2"/>
<path d="M467.6,608 Q473,603 477.7,605 Q483,609 482,612 Q482,618 479,621 Q474,624 470.5,622 Q466,618 468.3,615 Z" fill="#fff" stroke="#000" stroke-width="1.3" />
<path d="M487.8,621 L498,626.7 L515.3,639.7 L513.8,645.5 L505,639.7 L498,629.6" fill="#fff" stroke="#000" stroke-width="1.3" />
<path d="M473.4,623.8 L483.5,628 L495,639.7 L502.3,649.8 L498,652.7 L492,641 L485,632.5" fill="#fff" stroke="#000" stroke-width="1.3" />
<line x1="488" y1="642" x2="486" y2="652" stroke="#000" stroke-width="1.1" />
<path d="M79,599 L95,592 L99,600 L113,595 Q117,600 112,605 L98,610 L94,604 L83,609 Z" fill="#fff" stroke="#000" stroke-width="1.3" />
<ellipse cx="104" cy="602" rx="2" ry="1.5" transform="rotate(0 104 602)" fill="none" stroke="#000" stroke-width="1.2"/>
<path d="M160.2,532 L171.2,519.2 Q175,518 177.4,522.2 L187.1,547.9 L187.7,555.2 L179.8,549.1 L170,551.6 Z" fill="#fff" stroke="#000" stroke-width="1.3" />
<path d="M166,527 L169,525 L171,527 L174,526 L176,529 L178,531 L177,534 L179,537 L177,540 L175,542 L172,541 L170,543 L167,540 L168,537 L165,534 L167,531 Z" fill="none" stroke="#000" stroke-width="1.1" />
<path d="M268.7,697 Q270,693 276,692 L284,692 Q289,694 289.5,699 L290,704 L277,709 Q270,707 268.7,703 Z" fill="#fff" stroke="#000" stroke-width="1.3" />
<ellipse cx="277" cy="699.5" rx="2.2" ry="1.6" transform="rotate(0 277 699.5)" fill="none" stroke="#000" stroke-width="1.2"/>
<path d="M277,709 L277.5,716 L291,711 L290,704" fill="#fff" stroke="#000" stroke-width="1.3" />
<path d="M281,714 L296,708 L302,712 L288,719 Z" fill="#fff" stroke="#000" stroke-width="1.3" />
<ellipse cx="291" cy="712.5" rx="1.6" ry="1.6" transform="rotate(0 291 712.5)" fill="none" stroke="#000" stroke-width="1.2"/>
<path d="M394,649 L412,640 L428,645 L430,660 L420,664 L404,658 Z" fill="#fff" stroke="#000" stroke-width="1.3" />
<path d="M408,646 Q414,642 418,648 Q420,654 413,656 Q406,653 408,646 Z" fill="none" stroke="#000" stroke-width="1.3" />
<path d="M431,611 Q434,606 440,608 L450,612 L452,626 L446,632 L440,627 L436,618 Q430,616 431,611 Z" fill="#fff" stroke="#000" stroke-width="1.3" />
<ellipse cx="435.8" cy="612" rx="2.5" ry="1.8" transform="rotate(0 435.8 612)" fill="none" stroke="#000" stroke-width="1.2"/>
<ellipse cx="448.8" cy="630" rx="2" ry="2" transform="rotate(0 448.8 630)" fill="none" stroke="#000" stroke-width="1.2"/>
<path d="M99,536 L101,532 L113,532 L115,536 L115,544 L113,547 L101,547 L99,544 Z" fill="#fff" stroke="#000" stroke-width="1.3" />
<line x1="99" y1="536" x2="115" y2="536" stroke="#000" stroke-width="1" />
<line x1="105" y1="536" x2="105" y2="547" stroke="#000" stroke-width="1" />
<line x1="110" y1="536" x2="110" y2="547" stroke="#000" stroke-width="1" />
<path d="M102.5,547 L102.5,564 L111.5,564 L111.5,547" fill="#fff" stroke="#000" stroke-width="1.3" />
<line x1="102.5" y1="550" x2="111.5" y2="549" stroke="#000" stroke-width="1" />
<line x1="102.5" y1="553" x2="111.5" y2="552" stroke="#000" stroke-width="1" />
<line x1="102.5" y1="556" x2="111.5" y2="555" stroke="#000" stroke-width="1" />
<line x1="102.5" y1="559" x2="111.5" y2="558" stroke="#000" stroke-width="1" />
<line x1="102.5" y1="562" x2="111.5" y2="561" stroke="#000" stroke-width="1" />
<path d="M272,645 L274,641 L286,641 L288,645 L288,653 L286,656 L274,656 L272,653 Z" fill="#fff" stroke="#000" stroke-width="1.3" />
<line x1="272" y1="645" x2="288" y2="645" stroke="#000" stroke-width="1" />
<line x1="278" y1="645" x2="278" y2="656" stroke="#000" stroke-width="1" />
<line x1="283" y1="645" x2="283" y2="656" stroke="#000" stroke-width="1" />
<path d="M275.5,656 L275.5,673 L284.5,673 L284.5,656" fill="#fff" stroke="#000" stroke-width="1.3" />
<line x1="275.5" y1="659" x2="284.5" y2="658" stroke="#000" stroke-width="1" />
<line x1="275.5" y1="662" x2="284.5" y2="661" stroke="#000" stroke-width="1" />
<line x1="275.5" y1="665" x2="284.5" y2="664" stroke="#000" stroke-width="1" />
<line x1="275.5" y1="668" x2="284.5" y2="667" stroke="#000" stroke-width="1" />
<line x1="275.5" y1="671" x2="284.5" y2="670" stroke="#000" stroke-width="1" />
<ellipse cx="105" cy="573" rx="8" ry="4.5" transform="rotate(0 105 573)" fill="none" stroke="#000" stroke-width="1.1"/>
<ellipse cx="105" cy="573" rx="3.5" ry="2" transform="rotate(0 105 573)" fill="none" stroke="#000" stroke-width="1.2"/>
<ellipse cx="277" cy="678" rx="7.5" ry="4.2" transform="rotate(0 277 678)" fill="none" stroke="#000" stroke-width="1.1"/>
<ellipse cx="277" cy="678" rx="3" ry="1.8" transform="rotate(0 277 678)" fill="none" stroke="#000" stroke-width="1.2"/>
<text x="72" y="551" font-size="12">6</text>
<line x1="80" y1="545" x2="99" y2="545" stroke="#000" stroke-width="1.2" />
<text x="72" y="578" font-size="12">7</text>
<line x1="80" y1="572.4" x2="96" y2="572.4" stroke="#000" stroke-width="1.2" />
<text x="251" y="662" font-size="12">6</text>
<line x1="259" y1="657" x2="273" y2="657" stroke="#000" stroke-width="1.2" />
<text x="251" y="685" font-size="12">7</text>
<line x1="259" y1="679.5" x2="269" y2="679.5" stroke="#000" stroke-width="1.2" />
<line x1="105" y1="581" x2="104" y2="624" stroke="#000" stroke-width="1" stroke-dasharray="6 2 1.5 2"/>
<line x1="277" y1="683" x2="278" y2="702" stroke="#000" stroke-width="1" stroke-dasharray="6 2 1.5 2"/>
<text x="122" y="731" font-size="12">1</text>
<line x1="125.4" y1="697" x2="125.4" y2="717" stroke="#000" stroke-width="1.2" stroke-dasharray="8 1.5"/>
<circle cx="448.8" cy="822.9" r="18.3" fill="#8197d5" opacity="0.85"/>
<path d="M314.7,727.4 L300.5,734.5 L300.5,783 L294.4,789.4 L300.5,793.4 L300.5,843.2 L314.7,837" fill="none" stroke="#000" stroke-width="1.1" />
<text x="285" y="797" font-size="12">4</text>
<line x1="304.5" y1="787" x2="321.8" y2="780" stroke="#000" stroke-width="1.2" />
<text x="305" y="747" font-size="12">11</text>
<line x1="319.8" y1="736.6" x2="328" y2="733.5" stroke="#000" stroke-width="1.2" />
<text x="307" y="834" font-size="12">11</text>
<line x1="323.8" y1="826" x2="333" y2="822" stroke="#000" stroke-width="1.2" />
<path d="M449,724 L434.5,731.5 L434.5,781 L428.5,787 L434.5,791 L434.5,840 L449,834" fill="none" stroke="#000" stroke-width="1.1" />
<text x="408" y="793" font-size="12">4A</text>
<line x1="438.6" y1="784" x2="463" y2="774" stroke="#000" stroke-width="1.2" />
<text x="438" y="746" font-size="12">11</text>
<line x1="453.8" y1="737.6" x2="466" y2="732.5" stroke="#000" stroke-width="1.2" />
<text x="436" y="829" font-size="12.5">11A</text>
<line x1="460" y1="822" x2="468" y2="818" stroke="#000" stroke-width="1.2" />
<ellipse cx="337" cy="713" rx="7.5" ry="3.6" transform="rotate(0 337 713)" fill="none" stroke="#000" stroke-width="1.1"/>
<ellipse cx="337" cy="713" rx="4.5" ry="2" transform="rotate(0 337 713)" fill="none" stroke="#000" stroke-width="1"/>
<ellipse cx="336" cy="727.5" rx="7.5" ry="3.6" transform="rotate(0 336 727.5)" fill="none" stroke="#000" stroke-width="1.1"/>
<ellipse cx="336" cy="727.5" rx="4.5" ry="2" transform="rotate(0 336 727.5)" fill="none" stroke="#000" stroke-width="1"/>
<ellipse cx="339" cy="816" rx="7.5" ry="3.6" transform="rotate(0 339 816)" fill="none" stroke="#000" stroke-width="1.1"/>
<ellipse cx="339" cy="816" rx="4.5" ry="2" transform="rotate(0 339 816)" fill="none" stroke="#000" stroke-width="1"/>
<ellipse cx="477" cy="731.5" rx="7.5" ry="3.6" transform="rotate(0 477 731.5)" fill="none" stroke="#000" stroke-width="1.1"/>
<ellipse cx="477" cy="731.5" rx="4.5" ry="2" transform="rotate(0 477 731.5)" fill="none" stroke="#000" stroke-width="1"/>
<ellipse cx="478" cy="816" rx="7.5" ry="3.6" transform="rotate(0 478 816)" fill="none" stroke="#000" stroke-width="1.1"/>
<ellipse cx="478" cy="816" rx="4.5" ry="2" transform="rotate(0 478 816)" fill="none" stroke="#000" stroke-width="1"/>
<line x1="337" y1="700" x2="337" y2="712" stroke="#000" stroke-width="1" />
<ellipse cx="336" cy="738" rx="4.3" ry="2.2" transform="rotate(0 336 738)" fill="none" stroke="#000" stroke-width="1.3"/>
<path d="M330.5,744 Q336.5,740 343,744 L343,761 L330.5,761 Z" fill="#fff" stroke="#000" stroke-width="1.3" />
<line x1="330.5" y1="747.0" x2="343" y2="747.0" stroke="#000" stroke-width="1" />
<line x1="330.5" y1="750.3" x2="343" y2="750.3" stroke="#000" stroke-width="1" />
<line x1="330.5" y1="753.6" x2="343" y2="753.6" stroke="#000" stroke-width="1" />
<line x1="330.5" y1="756.9" x2="343" y2="756.9" stroke="#000" stroke-width="1" />
<ellipse cx="337.5" cy="765.5" rx="11" ry="3.8" transform="rotate(0 337.5 765.5)" fill="#fff" stroke="#000" stroke-width="1.3"/>
<path d="M326.5,766 L326.5,780 Q337.5,786 348.5,780 L348.5,766" fill="#fff" stroke="#000" stroke-width="1.3" />
<path d="M326.5,773 Q337.5,778 348.5,773" fill="none" stroke="#000" stroke-width="1.1" />
<ellipse cx="337.5" cy="781" rx="11.5" ry="3.6" transform="rotate(0 337.5 781)" fill="#fff" stroke="#000" stroke-width="1.3"/>
<path d="M328,783 L333.5,804 Q338,806 342.5,804 L347,783" fill="#fff" stroke="#000" stroke-width="1.3" />
<path d="M328.5,787.0 Q337.5,790.0 346.5,787.0" fill="none" stroke="#000" stroke-width="1.1" />
<path d="M330.0,791.5 Q337.5,794.5 345.0,791.5" fill="none" stroke="#000" stroke-width="1.1" />
<path d="M331.5,796.0 Q337.5,799.0 343.5,796.0" fill="none" stroke="#000" stroke-width="1.1" />
<path d="M332.7,800.5 Q337.5,803.5 342.3,800.5" fill="none" stroke="#000" stroke-width="1.1" />
<path d="M334.5,804 L335,809 Q338,811 341.5,809 L342,804" fill="#fff" stroke="#000" stroke-width="1.2" />
<path d="M335.3,757.8 L351.9,751.3 L355.5,760 L338.9,767.2 Z" fill="#fff" stroke="#000" stroke-width="1.3" />
<line x1="343" y1="755" x2="346.5" y2="763.5" stroke="#000" stroke-width="1" />
<line x1="347" y1="753.5" x2="350.5" y2="762" stroke="#000" stroke-width="1" />
<ellipse cx="341" cy="762" rx="2" ry="2.5" transform="rotate(0 341 762)" fill="none" stroke="#000" stroke-width="1"/>
<path d="M472,739 Q478,735 484,739 L484,760 L472,760 Z" fill="#fff" stroke="#000" stroke-width="1.3" />
<line x1="474" y1="746" x2="483" y2="746" stroke="#000" stroke-width="0.9" />
<line x1="474" y1="752" x2="482" y2="752" stroke="#000" stroke-width="0.9" />
<path d="M468,762 Q477,756 486,762 L486,792 Q477,797 468,792 Z" fill="#fff" stroke="#000" stroke-width="1.3" />
<path d="M479,758 L493,752 L498,763 L485,771 Z" fill="#fff" stroke="#000" stroke-width="1.3" />
<line x1="487" y1="756" x2="490" y2="764" stroke="#000" stroke-width="0.9" />
<line x1="491" y1="755" x2="494" y2="762" stroke="#000" stroke-width="0.9" />
<path d="M486,778 L494,771 L497,776 L488,789" fill="#fff" stroke="#000" stroke-width="1.3" />
<path d="M471,792 L484,792 L484,806 Q477,810 471,806 Z" fill="#fff" stroke="#000" stroke-width="1.3" />
<line x1="471" y1="798" x2="484" y2="798" stroke="#000" stroke-width="0.9" />
<line x1="471" y1="802" x2="484" y2="802" stroke="#000" stroke-width="0.9" />
<text x="380" y="732" font-size="12">5</text>
<line x1="382.7" y1="735.5" x2="382.7" y2="749.8" stroke="#000" stroke-width="1.2" />
<path d="M372,758 L386,751 L401,758 L400,767 L386,774 L372,766 Z" fill="#fff" stroke="#000" stroke-width="1.3" />
<path d="M372,758 L386,765 L401,758 M386,765 L386,774" fill="none" stroke="#000" stroke-width="1" />
<line x1="390" y1="766" x2="394" y2="764" stroke="#000" stroke-width="0.8" />
<line x1="392" y1="769" x2="396" y2="767" stroke="#000" stroke-width="0.8" />
<rect x="64" y="411" width="1.2" height="3" fill="#333"/></svg>
</div>

<!-- table header -->
<div class="hd" style="left:538px;width:48px"></div>
<div class="hd" style="left:588px;width:166px"></div>
<div class="hd" style="left:756px;width:213px"></div>
<div class="hd" style="left:971px;width:105px"></div>
<div class="hd" style="left:1078px;width:28px"></div>
<div class="hd" style="left:1108px;width:151px"></div>
<div class="hdt" style="left:544px">ПОЗ.</div>
<div class="hdt" style="left:594px">НОМЕР ДЕТАЛИ</div>
<div class="hdt" style="left:762px">НАИМЕНОВАНИЕ</div>
<div class="hdt" style="left:977px">ПРИМЕЧАНИЕ</div>
<div class="hdt" style="left:1084px">ST</div>
<div class="hdt" style="left:1114px;width:145px">ВВОД ДАННЫХ ПО МОДЕЛИ</div>

<div class="r" style="top:116px;height:32px">
<div class="c" style="left:538px;width:48px"></div>
<div class="c" style="left:588px;width:166px"></div>
<div class="c" style="left:756px;width:213px"></div>
<div class="c" style="left:971px;width:105px"></div>
<div class="c" style="left:1078px;width:28px"></div>
<div class="c" style="left:1108px;width:151px"></div>
</div>
<div class="t pos ser" style="top:116px">6</div>
<div class="t part" style="top:116px">N&nbsp;&nbsp;&nbsp;010&nbsp;215&nbsp;27</div>
<div class="t name" style="top:116px">Болт с шестигранной головкой</div>
<div class="t note" style="top:116px">M6X15</div>
<div class="t st" style="top:116px">4</div>
<div class="r" style="top:150px;height:32px">
<div class="c" style="left:538px;width:48px"></div>
<div class="c" style="left:588px;width:166px"></div>
<div class="c" style="left:756px;width:213px"></div>
<div class="c" style="left:971px;width:105px"></div>
<div class="c" style="left:1078px;width:28px"></div>
<div class="c" style="left:1108px;width:151px"></div>
</div>
<div class="t pos ser" style="top:150px">7</div>
<div class="t part" style="top:150px">N&nbsp;&nbsp;&nbsp;011&nbsp;524&nbsp;23</div>
<div class="t name" style="top:150px">Подкладная шайба</div>
<div class="t note" style="top:150px">6,4X12,5X1,6</div>
<div class="t st" style="top:150px">4</div>
<div class="r" style="top:184px;height:32px">
<div class="c" style="left:538px;width:48px"></div>
<div class="c" style="left:588px;width:166px"></div>
<div class="c" style="left:756px;width:213px"></div>
<div class="c" style="left:971px;width:105px"></div>
<div class="c" style="left:1078px;width:28px"></div>
<div class="c" style="left:1108px;width:151px"></div>
</div>
<div class="t pos ser" style="top:184px">8</div>
<div class="t part" style="top:184px">034&nbsp;133&nbsp;784</div>
<div class="t name" style="top:184px">Шланг, Г-образной формы</div>
<div class="t note" style="top:184px">3,5MM</div>
<div class="t st" style="top:184px">2</div>
<div class="r" style="top:218px;height:49px">
<div class="c" style="left:538px;width:48px"></div>
<div class="c" style="left:588px;width:166px"></div>
<div class="c" style="left:756px;width:213px"></div>
<div class="c" style="left:971px;width:105px"></div>
<div class="c" style="left:1078px;width:28px"></div>
<div class="c" style="left:1108px;width:151px"></div>
</div>
<div class="t pos" style="top:218px">-</div>
<div class="t part" style="top:218px">N&nbsp;&nbsp;&nbsp;020&nbsp;139&nbsp;1</div>
<div class="t name" style="top:218px">Трубка в рулонах по 5 м<br>'Заказывается по 5 м'</div>
<div class="t note" style="top:218px">4X1</div>
<div class="t st" style="top:218px">*</div>
<div class="r" style="top:269px;height:32px">
<div class="c" style="left:538px;width:48px"></div>
<div class="c" style="left:588px;width:166px"></div>
<div class="c" style="left:756px;width:213px"></div>
<div class="c" style="left:971px;width:105px"></div>
<div class="c" style="left:1078px;width:28px"></div>
<div class="c" style="left:1108px;width:151px"></div>
</div>
<div class="t pos ser" style="top:269px">9</div>
<div class="t namer" style="top:269px">укоротить до:</div>
<div class="t note" style="top:269px">340MM</div>
<div class="t st" style="top:269px">1</div>
<div class="r" style="top:303px;height:49px">
<div class="c" style="left:538px;width:48px"></div>
<div class="c" style="left:588px;width:166px"></div>
<div class="c" style="left:756px;width:213px"></div>
<div class="c" style="left:971px;width:105px"></div>
<div class="c" style="left:1078px;width:28px"></div>
<div class="c" style="left:1108px;width:151px"></div>
</div>
<div class="t pos" style="top:303px">10</div>
<div class="t part" style="top:303px">037&nbsp;198&nbsp;031</div>
<div class="t name" style="top:303px">Комплект прокладок для<br>регулятора давления</div>
<div class="t note" style="top:303px"></div>
<div class="t st" style="top:303px">1</div>
<div class="r" style="top:354px;height:32px">
<div class="c" style="left:538px;width:48px"></div>
<div class="c" style="left:588px;width:166px"></div>
<div class="c" style="left:756px;width:213px"></div>
<div class="c" style="left:971px;width:105px"></div>
<div class="c" style="left:1078px;width:28px"></div>
<div class="c" style="left:1108px;width:151px"></div>
</div>
<div class="t pos" style="top:354px">11</div>
<div class="t part" style="top:354px">035&nbsp;906&nbsp;149&nbsp;A</div>
<div class="t name" style="top:354px">Уплотнительное кольцо</div>
<div class="t note" style="top:354px">7,52X3,53</div>
<div class="t st" style="top:354px">16</div>
<div class="r" style="top:388px;height:32px">
<div class="c" style="left:538px;width:48px"></div>
<div class="c" style="left:588px;width:166px"></div>
<div class="c" style="left:756px;width:213px"></div>
<div class="c" style="left:971px;width:105px"></div>
<div class="c" style="left:1078px;width:28px"></div>
<div class="c" style="left:1108px;width:151px"></div>
</div>
<div class="t pos" style="top:388px">11</div>
<div class="t star" style="top:388px">*</div>
<div class="t part" style="top:388px">035&nbsp;906&nbsp;149&nbsp;A</div>
<div class="t name" style="top:388px">Уплотнительное кольцо</div>
<div class="t note" style="top:388px">7,52X3,53</div>
<div class="t st" style="top:388px">8</div>
<div class="t inp" style="top:388px">AKG,AKJ</div>
<div class="r sel" style="top:422px;height:32px">
<div class="c" style="left:538px;width:48px"></div>
<div class="c" style="left:588px;width:166px"></div>
<div class="c" style="left:756px;width:213px"></div>
<div class="c" style="left:971px;width:105px"></div>
<div class="c" style="left:1078px;width:28px"></div>
<div class="c" style="left:1108px;width:151px"></div>
</div>
<div class="t pos" style="top:422px">11A</div>
<div class="t part" style="top:422px">077&nbsp;906&nbsp;149&nbsp;A</div>
<div class="t name" style="top:422px">Уплотнительное кольцо</div>
<div class="t note" style="top:422px">13X2,5</div>
<div class="t st" style="top:422px">8</div>
<div class="t inp" style="top:422px">AKG,AKJ</div>
<div class="r" style="top:456px;height:32px">
<div class="c" style="left:538px;width:48px"></div>
<div class="c" style="left:588px;width:166px"></div>
<div class="c" style="left:756px;width:213px"></div>
<div class="c" style="left:971px;width:105px"></div>
<div class="c" style="left:1078px;width:28px"></div>
<div class="c" style="left:1108px;width:151px"></div>
</div>
<div class="t pos" style="top:456px">12</div>
<div class="t part" style="top:456px">077&nbsp;127&nbsp;565</div>
<div class="t name" style="top:456px">Тройник Т-образной формы</div>
<div class="t note" style="top:456px">10/10/10</div>
<div class="t st" style="top:456px">1</div>
<div class="t inp" style="top:456px">AKG,AKJ</div>
<div class="r" style="top:490px;height:32px">
<div class="c" style="left:538px;width:48px"></div>
<div class="c" style="left:588px;width:166px"></div>
<div class="c" style="left:756px;width:213px"></div>
<div class="c" style="left:971px;width:105px"></div>
<div class="c" style="left:1078px;width:28px"></div>
<div class="c" style="left:1108px;width:151px"></div>
</div>
<div class="t pos" style="top:490px">13</div>
<div class="t part" style="top:490px">044&nbsp;127&nbsp;563&nbsp;A</div>
<div class="t name" style="top:490px">Тройник Т-образной формы</div>
<div class="t note" style="top:490px">&nbsp;8/8/8</div>
<div class="t st" style="top:490px">X</div>
<div class="t inp" style="top:490px">AKG,AKJ</div>
<div class="r" style="top:524px;height:49px">
<div class="c" style="left:538px;width:48px"></div>
<div class="c" style="left:588px;width:166px"></div>
<div class="c" style="left:756px;width:213px"></div>
<div class="c" style="left:971px;width:105px"></div>
<div class="c" style="left:1078px;width:28px"></div>
<div class="c" style="left:1108px;width:151px"></div>
</div>
<div class="t pos" style="top:524px">-</div>
<div class="t part" style="top:524px">N&nbsp;&nbsp;&nbsp;103&nbsp;035&nbsp;01</div>
<div class="t name" style="top:524px">Шланг в рулонах по 5 м<br>'Заказывается по 5 м'</div>
<div class="t note" style="top:524px">7,3X3,5</div>
<div class="t st" style="top:524px">*</div>
<div class="r" style="top:575px;height:49px">
<div class="c" style="left:538px;width:48px"></div>
<div class="c" style="left:588px;width:166px"></div>
<div class="c" style="left:756px;width:213px"></div>
<div class="c" style="left:971px;width:105px"></div>
<div class="c" style="left:1078px;width:28px"></div>
<div class="c" style="left:1108px;width:151px"></div>
</div>
<div class="t pos" style="top:575px">14</div>
<div class="t namer" style="top:575px">укоротить до:<br>смотри иллюстр.</div>
<div class="t note" style="top:575px">200MM<br>133-94</div>
<div class="t st" style="top:575px">1</div>
<div class="t inp" style="top:575px">AKG,AKJ</div>
<div class="r" style="top:626px;height:32px">
<div class="c" style="left:538px;width:48px"></div>
<div class="c" style="left:588px;width:166px"></div>
<div class="c" style="left:756px;width:213px"></div>
<div class="c" style="left:971px;width:105px"></div>
<div class="c" style="left:1078px;width:28px"></div>
<div class="c" style="left:1108px;width:151px"></div>
</div>
<div class="t pos" style="top:626px">15</div>
<div class="t namer" style="top:626px">укоротить до:</div>
<div class="t note" style="top:626px">340MM</div>
<div class="t st" style="top:626px">1</div>
<div class="t inp" style="top:626px">AKG,AKJ</div>
<div class="r" style="top:660px;height:32px">
<div class="c" style="left:538px;width:48px"></div>
<div class="c" style="left:588px;width:166px"></div>
<div class="c" style="left:756px;width:213px"></div>
<div class="c" style="left:971px;width:105px"></div>
<div class="c" style="left:1078px;width:28px"></div>
<div class="c" style="left:1108px;width:151px"></div>
</div>
<div class="t pos" style="top:660px">16</div>
<div class="t namer" style="top:660px">укоротить до:</div>
<div class="t note" style="top:660px">&nbsp;75MM</div>
<div class="t st" style="top:660px">X</div>
<div class="t inp" style="top:660px">AKG,AKJ</div>
<div class="r" style="top:694px;height:32px">
<div class="c" style="left:538px;width:48px"></div>
<div class="c" style="left:588px;width:166px"></div>
<div class="c" style="left:756px;width:213px"></div>
<div class="c" style="left:971px;width:105px"></div>
<div class="c" style="left:1078px;width:28px"></div>
<div class="c" style="left:1108px;width:151px"></div>
</div>
<div class="t pos" style="top:694px">17</div>
<div class="t namer" style="top:694px">укоротить до:</div>
<div class="t note" style="top:694px">155MM</div>
<div class="t st" style="top:694px">X</div>
<div class="t inp" style="top:694px">AKG,AKJ</div>
<div class="r" style="top:728px;height:32px">
<div class="c" style="left:538px;width:48px"></div>
<div class="c" style="left:588px;width:166px"></div>
<div class="c" style="left:756px;width:213px"></div>
<div class="c" style="left:971px;width:105px"></div>
<div class="c" style="left:1078px;width:28px"></div>
<div class="c" style="left:1108px;width:151px"></div>
</div>
<div class="t pos" style="top:728px">18</div>
<div class="t namer" style="top:728px">укоротить до:</div>
<div class="t note" style="top:728px">120MM</div>
<div class="t st" style="top:728px">1</div>
<div class="t inp" style="top:728px">AKG,AKJ</div>
<div class="r" style="top:762px;height:32px">
<div class="c" style="left:538px;width:48px"></div>
<div class="c" style="left:588px;width:166px"></div>
<div class="c" style="left:756px;width:213px"></div>
<div class="c" style="left:971px;width:105px"></div>
<div class="c" style="left:1078px;width:28px"></div>
<div class="c" style="left:1108px;width:151px"></div>
</div>
<div class="t pos" style="top:762px">19</div>
<div class="t namer" style="top:762px">укоротить до:</div>
<div class="t note" style="top:762px">&nbsp;50MM</div>
<div class="t st" style="top:762px">1</div>
<div class="t inp" style="top:762px">AKG,AKJ</div>
<div class="r" style="top:796px;height:32px">
<div class="c" style="left:538px;width:48px"></div>
<div class="c" style="left:588px;width:166px"></div>
<div class="c" style="left:756px;width:213px"></div>
<div class="c" style="left:971px;width:105px"></div>
<div class="c" style="left:1078px;width:28px"></div>
<div class="c" style="left:1108px;width:151px"></div>
</div>
<div class="t pos" style="top:796px">20</div>
<div class="t namer" style="top:796px">укоротить до:</div>
<div class="t note" style="top:796px">&nbsp;90MM</div>
<div class="t st" style="top:796px">X</div>
<div class="t inp" style="top:796px">AKG,AKJ</div>
<div class="a" id="selb"></div>

<div class="a" id="vtrack"></div>
<div class="sbtn" style="left:1261px;top:93px"><svg width="13" height="13" style="position:absolute;left:0;top:0"><path d="M3,8 L6.5,4.5 L10,8" fill="none" stroke="#3d5180" stroke-width="2.3"/></svg></div>
<div class="a" id="vthumb"></div>
<div class="sbtn" style="left:1261px;top:816px"><svg width="13" height="13" style="position:absolute;left:0;top:0"><path d="M3,5 L6.5,8.5 L10,5" fill="none" stroke="#3d5180" stroke-width="2.3"/></svg></div>
<div class="a" id="htrack"></div>
<div class="sbtn" style="left:539px;top:834px"><svg width="13" height="13" style="position:absolute;left:0;top:0"><path d="M8,3 L4.5,6.5 L8,10" fill="none" stroke="#3d5180" stroke-width="2.3"/></svg></div>
<div class="a" id="hthumb"></div>
<div class="sbtn" style="left:1243px;top:834px"><svg width="13" height="13" style="position:absolute;left:0;top:0"><path d="M5,3 L8.5,6.5 L5,10" fill="none" stroke="#3d5180" stroke-width="2.3"/></svg></div>
<div class="a" id="corner"></div>

<div class="a" id="foot"></div>
<div class="a" id="flogo"></div>
<div class="fb" style="left:154px;width:52px"></div><div class="fbt" style="left:157px">ЗАКАЗ</div>
<div class="fb" style="left:369px;width:35px"></div><div class="fbt" style="left:372px">MKB</div>
<div class="fb" style="left:475px;width:34px"></div><div class="fbt" style="left:478px">GKB</div>
<div class="fb" style="left:753px;width:104px"></div><div class="fbt" style="left:755px">НОМЕР ШАССИ</div>
<div class="fb" style="left:1002px;width:178px"></div><div class="fbt" style="left:1050px">ВОЕ ОБОЗНАЧЕНИЕ</div>
<svg class="a" style="left:26px;top:868px" width="28" height="29" viewBox="0 0 28 29">
<path d="M2.5,11 L2.5,1.5 L25,1.5 L25,27" fill="none" stroke="#fff" stroke-width="1.3"/>
<text x="1" y="17" font-size="10.5" font-weight="bold" fill="#fff" letter-spacing="-0.5">LEX</text>
<text x="0.5" y="27" font-size="10.5" font-weight="bold" fill="#fff" letter-spacing="-1">COM</text>
</svg>
</body></html>
